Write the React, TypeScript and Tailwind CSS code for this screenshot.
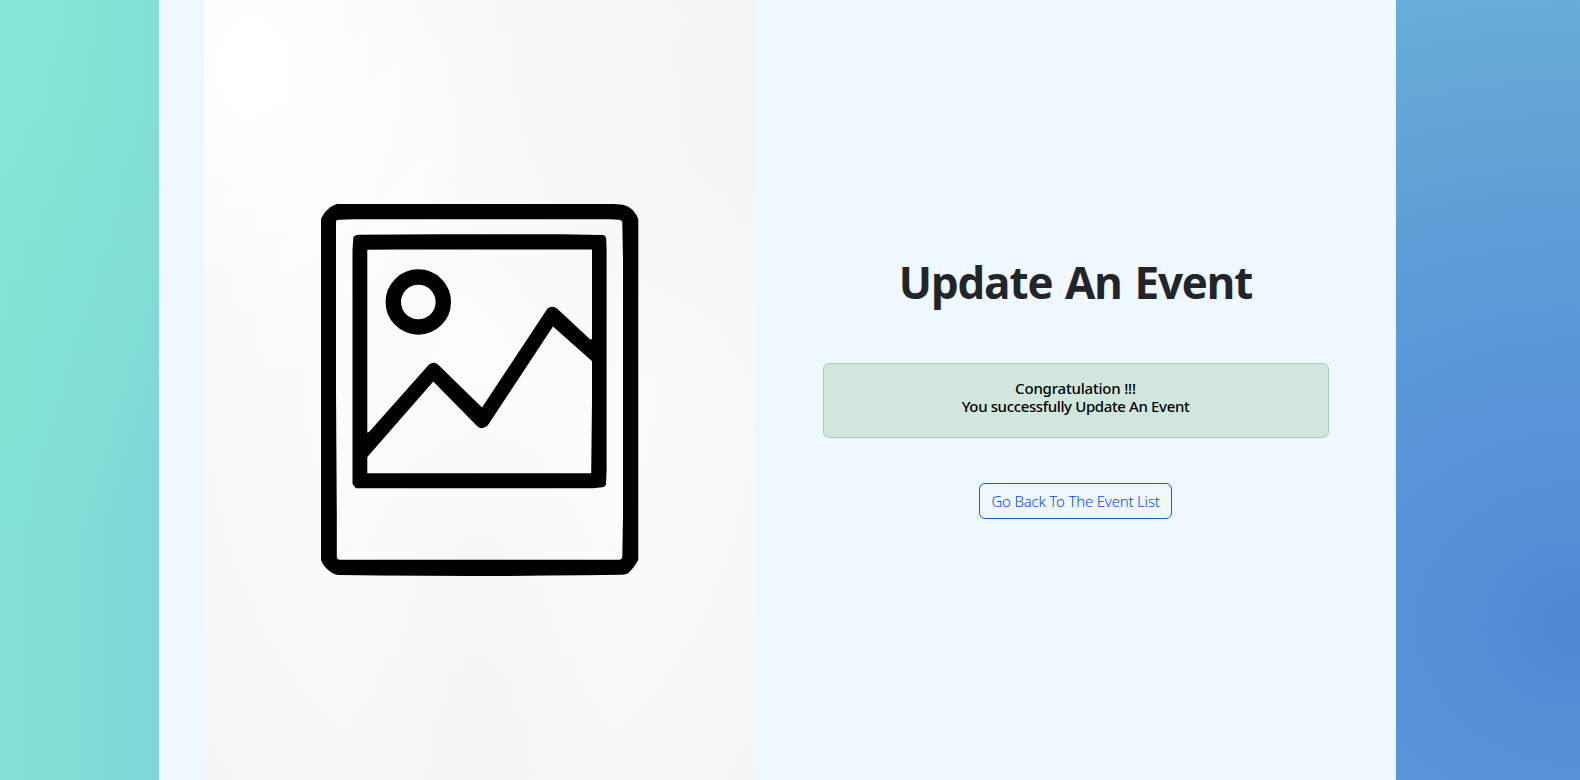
function PicturePlaceholder() {
  return (
    <svg className="block h-full w-full" viewBox="204 0 551 780" preserveAspectRatio="none" aria-hidden="true">
      <path
        fillRule="evenodd"
        d="M337 204H614L623 204.7Q629 206 633.5 211Q637 215 638.3 219V560Q634 568 628.5 573Q626 574.6 622 574.8L585 575.3Q480 576.5 380 575.5L338 575Q332 574 326 568Q322 564 321 560V219Q324 212 330 207.500Q333 205 337 204ZM339 219.700Q336 219.800 336 222V390L336.800 515V557Q337 559.500 340 559.700H619Q622 559.500 622.300 557L623 515V260L622.300 222Q622 220 619 219.800L610 219.200H355Z"
      />
      <path
        fillRule="evenodd"
        d="M358 234.700L440 234.200H560L603 235Q606 235.500 606.200 239L606.600 250V470L606 484Q605.500 487 602 487.300L593 488.300H356L352.500 484V250L353.300 238Q354 235.300 358 234.700ZM367.300 249.700V473.300H591.200L592 400V249.500H400Z"
      />
      <circle cx="418.300" cy="302" r="25" fill="none" stroke="#000" strokeWidth="15.400" />
      <path d="M366 433L369 432L429 364.500Q433.500 361 438 364.500L482 407.500L547.500 308.500Q552 305 557 308.500L590 339.300H593V362L553 326.500L488 425Q482.500 431 477 426L433.300 381.500L366 458.500Z" />
    </svg>
  );
}

export default function App() {
  return (
    <div className="flex h-[780px] w-full overflow-hidden font-['Open_Sans','Noto_Sans',sans-serif]">
      <div className="w-[159px] shrink-0 bg-[radial-gradient(ellipse_330px_560px_at_0_0,#86e7d6_0%,#86e7d600_100%),linear-gradient(to_right,#83e1d6,#7cd7d7)]" />
      <main className="flex min-w-0 flex-1 bg-[#f0f8ff] pl-[45px]">
        <div className="w-[551px] shrink-0 bg-[radial-gradient(ellipse_at_8%_8%,#ffffff_0%,#ffffff00_35%),radial-gradient(ellipse_at_72%_10%,#f6f6f8_0%,#f6f6f800_32%),radial-gradient(ellipse_at_100%_14%,#f4f4f5_0%,#f4f4f500_30%),radial-gradient(ellipse_at_50%_95%,#f4f4f6_0%,#f4f4f600_35%),radial-gradient(ellipse_at_50%_46%,#fdfdfd_0%,#fbfbfc_50%,#f5f5f5_100%)]">
          <PicturePlaceholder />
        </div>
        <section className="flex flex-1 flex-col items-center pt-[253px]">
          <h1 className="text-[44px] leading-[58px] font-bold tracking-[-1.2px] whitespace-nowrap text-[#212529] [word-spacing:2.500px]">
            Update An Event
          </h1>
          <div className="mt-[52px] h-[75px] w-[506px] rounded-[6px] border border-[#a3cfbb] bg-[#d1e7dd] pt-[15px] text-center font-['Noto_Sans','Open_Sans',sans-serif] text-[15px] leading-[18px] font-medium text-black">
            <p className="tracking-[-0.2px]">Congratulation !!!</p>
            <p className="tracking-[-0.37px]">You successfully Update An Event</p>
          </div>
          <button className="mt-[45px] h-9 w-[193px] rounded-[6px] border border-[#0d5cfd] font-['Noto_Sans','Open_Sans',sans-serif] text-[15px] font-light tracking-[-0.2px] whitespace-nowrap text-[#0048ff]">
            Go Back To The Event List
          </button>
        </section>
      </main>
      <div className="w-[184px] shrink-0 bg-[radial-gradient(ellipse_780px_680px_at_100%_80%,#5288d7_0%,#5791d7_22%,#5b99d7_50%,#68aed7_95%)]" />
    </div>
  );
}
